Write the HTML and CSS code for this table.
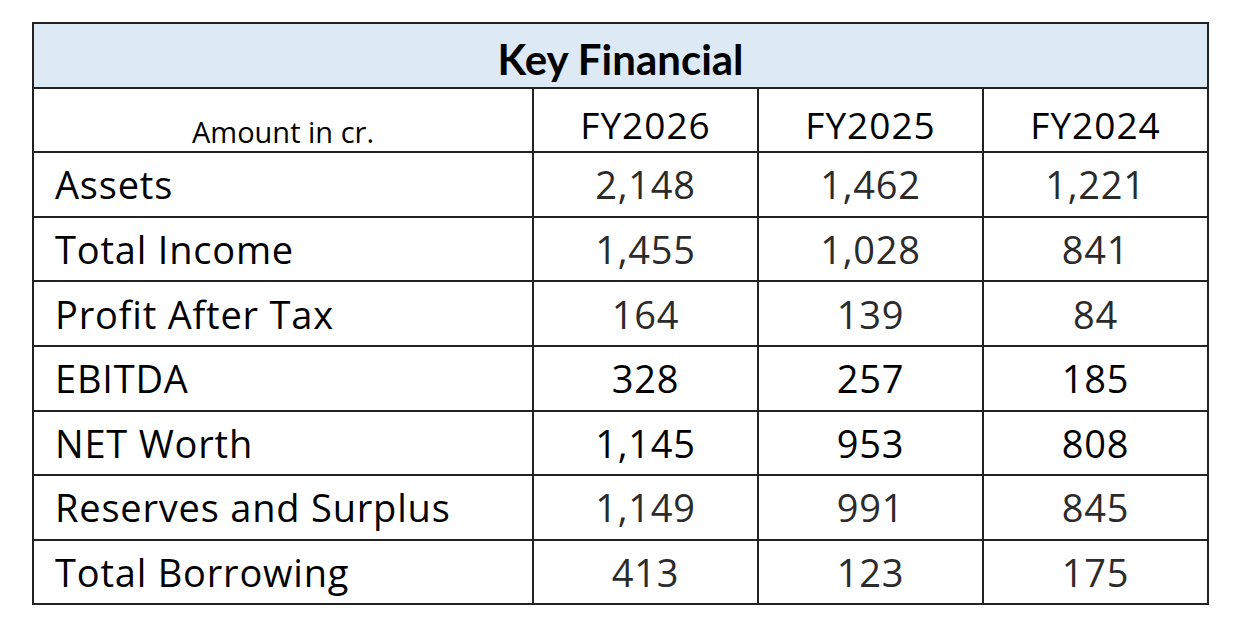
FILE: index.html
```html
<!DOCTYPE html>
<html lang="en">
<head>
<meta charset="utf-8">
<title>Key Financial</title>
<link rel="stylesheet" href="styles.css">
</head>
<body>
<table class="fin">
  <colgroup>
    <col class="c-label"><col class="c-val"><col class="c-val"><col class="c-val">
  </colgroup>
  <thead>
    <tr class="title-row"><th colspan="4">Key Financial</th></tr>
    <tr class="year-row">
      <th class="unit">Amount in cr.</th>
      <th>FY2026</th><th>FY2025</th><th>FY2024</th>
    </tr>
  </thead>
  <tbody>
    <tr class="soft"><td class="label">Assets</td><td>2,148</td><td>1,462</td><td>1,221</td></tr>
    <tr class="soft"><td class="label">Total Income</td><td>1,455</td><td>1,028</td><td>841</td></tr>
    <tr class="soft"><td class="label">Profit After Tax</td><td>164</td><td>139</td><td>84</td></tr>
    <tr><td class="label">EBITDA</td><td>328</td><td>257</td><td>185</td></tr>
    <tr><td class="label">NET Worth</td><td>1,145</td><td>953</td><td>808</td></tr>
    <tr class="soft"><td class="label">Reserves and Surplus</td><td>1,149</td><td>991</td><td>845</td></tr>
    <tr class="soft"><td class="label">Total Borrowing</td><td>413</td><td>123</td><td>175</td></tr>
  </tbody>
</table>
</body>
</html>
```
FILE: styles.css
```css
html, body {
  margin: 0;
  padding: 0;
  background: #ffffff;
}
body {
  padding: 22px 0 0 32px;
  font-family: "Open Sans", "Noto Sans", sans-serif;
  color: #000;
}
.fin {
  border-collapse: collapse;
  table-layout: fixed;
  width: 1176px;
  border: 2px solid #222;
}
.c-label { width: 500px; }
.c-val { width: 225px; }
.fin th, .fin td {
  border: 2px solid #222;
  padding: 0;
  height: 62.6px;
  text-align: center;
  vertical-align: middle;
  font-weight: 400;
  font-size: 38px;
  letter-spacing: 0.8px;
  line-height: 1;
  white-space: nowrap;
}
.title-row th {
  background: #ddeaf6;
  font-family: Lato, "Open Sans", sans-serif;
  font-weight: 700;
  font-size: 42px;
  letter-spacing: 0;
  height: 54.6px;
  padding-top: 8px;
}
.year-row th {
  font-size: 37px;
  letter-spacing: 1px;
  height: 53.6px;
  padding-top: 9px;
}
.year-row .unit {
  font-size: 29px;
  letter-spacing: 0;
  height: 38.6px;
  padding-top: 24px;
}
.fin td.label {
  text-align: left;
  padding-left: 21px;
}
.soft td:not(.label) {
  color: #2b2b2b;
}
```
